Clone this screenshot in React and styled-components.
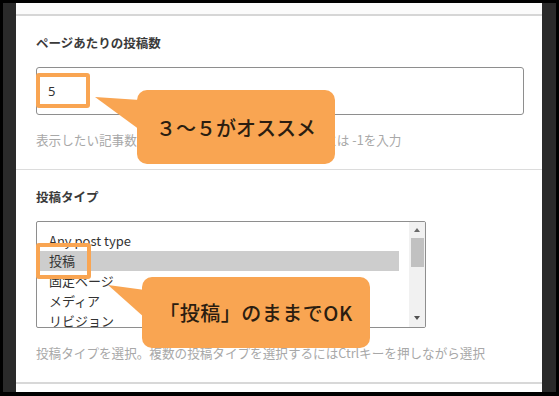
import React from "react";
import styled, { createGlobalStyle } from "styled-components";

const Global = createGlobalStyle`
  html, body { margin: 0; padding: 0; background: #000; }
  body { width: 559px; height: 396px; overflow: hidden; font-family: "Noto Sans CJK JP", "Noto Sans", sans-serif; }
  * { box-sizing: border-box; }
`;

const ORANGE = "#f9a552";

const Frame = styled.div`
  display: flex;
  height: 396px;
  padding: 3px 0 4px 0;
`;

const Strip = styled.div`
  width: ${(p) => p.$w}px;
  margin-left: ${(p) => p.$ml || 0}px;
  margin-right: ${(p) => p.$mr || 0}px;
  background: #2a2a2a;
`;

const Panel = styled.div`
  position: relative;
  width: 526px;
  background: #fff;
  display: flex;
  flex-direction: column;
`;

const TopBar = styled.div`
  height: 13px;
  background: #fbfbfb;
  border-bottom: 2px solid #d6d6d6;
`;

const Section = styled.div`
  padding: 18px 18px 20px 20px;
  border-bottom: ${(p) => (p.$last ? "2px solid #d8d8d8" : "1px solid #dcdcdc")};
  display: flex;
  flex-direction: column;
`;

const Title = styled.div`
  font-size: 12.5px;
  line-height: 18px;
  font-weight: 700;
  color: #3a3a3a;
  margin-bottom: 15px;
`;

const Input = styled.div`
  height: 48px;
  width: 488px;
  border: 1px solid #8e8e8e;
  border-radius: 3px;
  padding-left: 11px;
  display: flex;
  align-items: center;
  font-size: 13px;
  color: #333;
  font-family: "Noto Sans", sans-serif;
`;

const Help = styled.div`
  margin-top: 16px;
  font-size: 12.6px;
  line-height: 18px;
  color: #a8a8a8;
  white-space: nowrap;
`;

const ListBox = styled.div`
  width: 390px;
  height: 107px;
  border: 1px solid #8e8e8e;
  border-radius: 2px;
  display: flex;
  overflow: hidden;
`;

const Options = styled.div`
  flex: 1;
  padding: 9px 10px 0 3px;
  overflow: hidden;
`;

const Option = styled.div`
  height: 20px;
  line-height: 20px;
  padding-left: 9px;
  font-size: 13px;
  color: #333;
  background: ${(p) => (p.$selected ? "#cdcdcd" : "transparent")};
  white-space: nowrap;
`;

const Scrollbar = styled.div`
  width: 16px;
  background: #f1f1f1;
  display: flex;
  flex-direction: column;
  align-items: center;
`;

const ArrowBox = styled.div`
  height: ${(p) => p.$h}px;
  width: 100%;
  display: flex;
  align-items: center;
  justify-content: center;
`;

const Arrow = styled.div`
  width: 0;
  height: 0;
  border-left: 3.5px solid transparent;
  border-right: 3.5px solid transparent;
  ${(p) => (p.$up ? "border-bottom: 4px solid #6a6a6a;" : "border-top: 4px solid #505050;")}
`;

const Thumb = styled.div`
  width: 13px;
  height: 29px;
  background: #c1c1c1;
`;

const Track = styled.div`
  flex: 1;
`;

const Highlight = styled.div`
  position: absolute;
  left: ${(p) => p.$x}px;
  top: ${(p) => p.$y}px;
  width: ${(p) => p.$w}px;
  height: ${(p) => p.$h}px;
  border: 4px solid ${ORANGE};
  border-radius: 3px;
`;

const Callout = styled.div`
  position: absolute;
  left: ${(p) => p.$x}px;
  top: ${(p) => p.$y}px;
  width: ${(p) => p.$w}px;
  height: ${(p) => p.$h}px;
  background: ${ORANGE};
  border-radius: 10px;
  display: flex;
  align-items: center;
  justify-content: center;
  font-size: ${(p) => p.$fs}px;
  font-weight: 500;
  color: #2b1d10;
  letter-spacing: ${(p) => p.$ls || 0}px;
  white-space: nowrap;
`;

const TailSvg = styled.svg`
  position: absolute;
  left: ${(p) => p.$x}px;
  top: 0;
  overflow: visible;
`;

function Tail({ x, points }) {
  return (
    <TailSvg $x={x} width="50" height="50" viewBox="0 0 50 50">
      <polygon points={points} fill={ORANGE} />
    </TailSvg>
  );
}

export default function App() {
  return (
    <>
      <Global />
      <Frame>
        <Strip $w={13} $ml={3} />
        <Panel>
          <TopBar />
          <Section>
            <Title>ページあたりの投稿数</Title>
            <Input>5</Input>
            <Help>表示したい記事数を入力。すべての記事を表示するには -1を入力</Help>
          </Section>
          <Section $last>
            <Title>投稿タイプ</Title>
            <ListBox>
              <Options>
                <Option>Any post type</Option>
                <Option $selected>投稿</Option>
                <Option>固定ページ</Option>
                <Option>メディア</Option>
                <Option>リビジョン</Option>
              </Options>
              <Scrollbar>
                <ArrowBox $h={16}>
                  <Arrow $up />
                </ArrowBox>
                <Thumb />
                <Track />
                <ArrowBox $h={18}>
                  <Arrow />
                </ArrowBox>
              </Scrollbar>
            </ListBox>
            <Help>投稿タイプを選択。複数の投稿タイプを選択するにはCtrlキーを押しながら選択</Help>
          </Section>

          <Highlight $x={20} $y={70} $w={54} $h={35} />
          <Highlight $x={20} $y={240} $w={55} $h={36} />

          <Callout $x={121} $y={87} $w={198} $h={74} $fs={20}>
            <Tail x={-45} points="3,7 48,10 48,40" />
            ３～５がオススメ
          </Callout>
          <Callout $x={126} $y={274} $w={228} $h={71} $fs={20} $ls={0.5}>
            <Tail x={-36} points="2,8 39,13 39,41" />
            「投稿」のままでOK
          </Callout>
        </Panel>
        <Strip $w={14} $mr={3} />
      </Frame>
    </>
  );
}
